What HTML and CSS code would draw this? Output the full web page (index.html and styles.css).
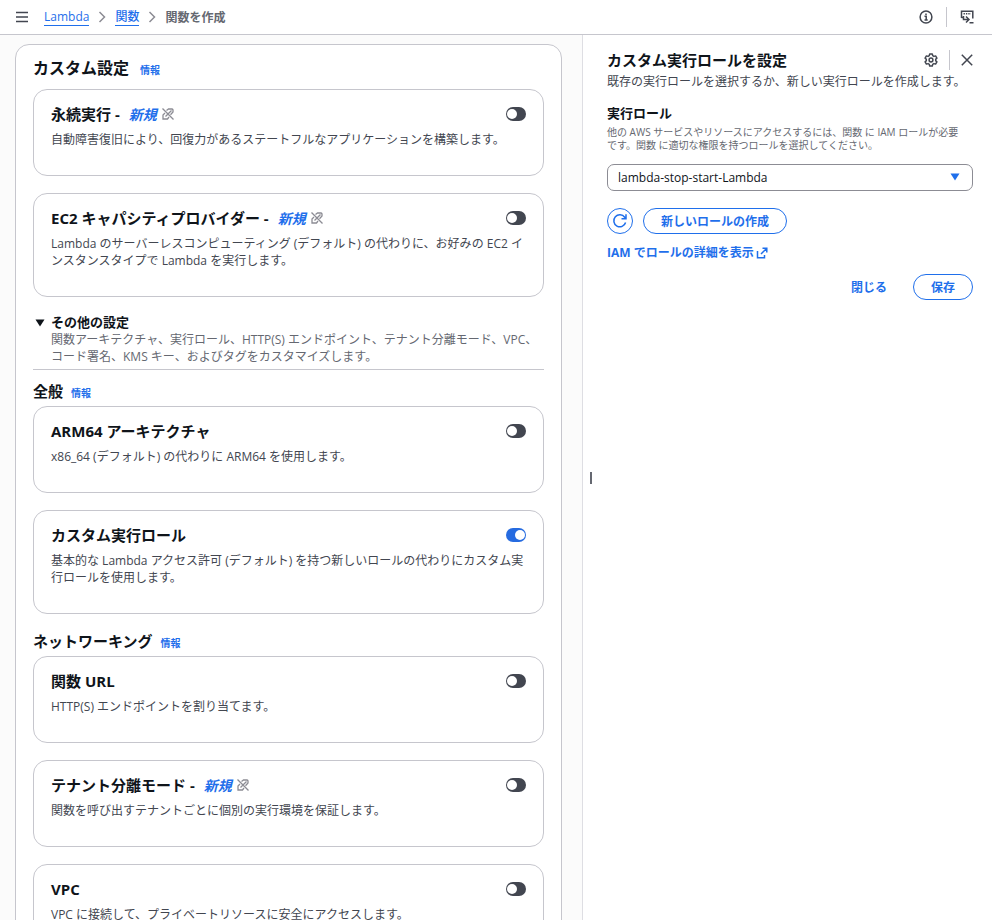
FILE: index.html
```html
<!DOCTYPE html>
<html lang="ja">
<head>
    <meta charset="UTF-8">
    <meta name="viewport" content="width=device-width, initial-scale=1.0">
    <title>関数を作成 - Lambda</title>
    <link rel="stylesheet" href="styles.css">
</head>
<body>
    <!-- Shared icons -->
    <svg class="sprite" aria-hidden="true">
        <symbol id="icon-new" viewBox="0 0 12 12">
            <path d="M.5 .5l11 11M4.500 2.500L6.500 1h3.500a1.300 1.300 0 0 1 1 1v2L8.500 6.800M9.500 2.500L3.500 8.500M3 5L1 7v4h4.500l1.500-2"/>
        </symbol>
        <symbol id="icon-chevron" viewBox="0 0 8 12">
            <path d="M1.500 1l5 5-5 5"/>
        </symbol>
    </svg>

    <header class="topbar">
        <button class="icon-btn" type="button" aria-label="メニュー">
            <svg width="12" height="12" viewBox="0 0 12 12"><path d="M0 1.500h12M0 6h12M0 10.500h12"/></svg>
        </button>
        <nav class="breadcrumb">
            <a href="#">Lambda</a>
            <svg class="chevron" width="8" height="12"><use href="#icon-chevron"/></svg>
            <a href="#">関数</a>
            <svg class="chevron" width="8" height="12"><use href="#icon-chevron"/></svg>
            <span class="current">関数を作成</span>
        </nav>
        <div class="topbar-tools">
            <button class="icon-btn" type="button" aria-label="ヘルプ">
                <svg width="14" height="14" viewBox="0 0 14 14"><circle cx="7" cy="7" r="5.900"/><path d="M5.500 6.300H7.200V10M5.500 10h3.200M7 3.500v1.500"/></svg>
            </button>
            <span class="divider"></span>
            <button class="icon-btn" type="button" aria-label="CloudShell">
                <svg width="14" height="14" viewBox="0 0 14 14"><path d="M1.500 8V1.200h11.300V8.500M9.500 12.800h4M1.500 7.500h1.500M3.500 6v3.500h5M6 6.500l3 3-3 3"/><path stroke-dasharray="1.400 1" d="M3.500 3.800h7.500"/></svg>
            </button>
        </div>
    </header>

    <div class="layout">
        <main class="main-pane">
            <section class="panel">
                <div class="panel-heading">
                    <h1>カスタム設定</h1>
                    <a class="info" href="#">情報</a>
                </div>

                <div class="cards">
                    <div class="card">
                        <div class="card-title">
                            <h2><label for="durable">永続実行 -</label></h2>
                            <a class="new" href="#">新規<svg width="12" height="12"><use href="#icon-new"/></svg></a>
                            <input class="toggle" type="checkbox" id="durable">
                        </div>
                        <p>自動障害復旧により、回復力があるステートフルなアプリケーションを構築します。</p>
                    </div>
                    <div class="card">
                        <div class="card-title">
                            <h2><label for="capacity">EC2 キャパシティプロバイダー -</label></h2>
                            <a class="new" href="#">新規<svg width="12" height="12"><use href="#icon-new"/></svg></a>
                            <input class="toggle" type="checkbox" id="capacity">
                        </div>
                        <p>Lambda のサーバーレスコンピューティング (デフォルト) の代わりに、お好みの EC2 インスタンスタイプで Lambda を実行します。</p>
                    </div>
                </div>

                <details class="more" open>
                    <summary>
                        <svg class="caret" width="10" height="8" viewBox="0 0 10 8"><path d="M.5 .5h9L5 7.500z"/></svg>
                        <div>
                            <h2>その他の設定</h2>
                            <p>関数アーキテクチャ、実行ロール、HTTP(S) エンドポイント、テナント分離モード、VPC、コード署名、KMS キー、およびタグをカスタマイズします。</p>
                        </div>
                    </summary>

                    <div class="section-heading">
                        <h2>全般</h2>
                        <a class="info" href="#">情報</a>
                    </div>
                    <div class="cards">
                        <div class="card">
                            <div class="card-title">
                                <h3><label for="arm64">ARM64 アーキテクチャ</label></h3>
                                <input class="toggle" type="checkbox" id="arm64">
                            </div>
                            <p>x86_64 (デフォルト) の代わりに ARM64 を使用します。</p>
                        </div>
                        <div class="card">
                            <div class="card-title">
                                <h3><label for="custom-role">カスタム実行ロール</label></h3>
                                <input class="toggle" type="checkbox" id="custom-role" checked>
                            </div>
                            <p>基本的な Lambda アクセス許可 (デフォルト) を持つ新しいロールの代わりにカスタム実行ロールを使用します。</p>
                        </div>
                    </div>

                    <div class="section-heading">
                        <h2>ネットワーキング</h2>
                        <a class="info" href="#">情報</a>
                    </div>
                    <div class="cards">
                        <div class="card">
                            <div class="card-title">
                                <h3><label for="function-url">関数 URL</label></h3>
                                <input class="toggle" type="checkbox" id="function-url">
                            </div>
                            <p>HTTP(S) エンドポイントを割り当てます。</p>
                        </div>
                        <div class="card">
                            <div class="card-title">
                                <h3><label for="tenant">テナント分離モード -</label></h3>
                                <a class="new" href="#">新規<svg width="12" height="12"><use href="#icon-new"/></svg></a>
                                <input class="toggle" type="checkbox" id="tenant">
                            </div>
                            <p>関数を呼び出すテナントごとに個別の実行環境を保証します。</p>
                        </div>
                        <div class="card">
                            <div class="card-title">
                                <h3><label for="vpc">VPC</label></h3>
                                <input class="toggle" type="checkbox" id="vpc">
                            </div>
                            <p>VPC に接続して、プライベートリソースに安全にアクセスします。</p>
                        </div>
                    </div>
                </details>
            </section>
        </main>

        <aside class="side-pane">
            <div class="resize-handle" role="separator" aria-orientation="vertical"></div>
            <div class="side-content">
                <div class="side-heading">
                    <h2>カスタム実行ロールを設定</h2>
                    <button class="icon-btn" type="button" aria-label="設定">
                        <svg width="14" height="14" viewBox="0 0 14 14"><path stroke-linejoin="round" d="M5.700 1h2.600l.4 1.700 1.200.7 1.700-.5 1.300 2.200L11.700 6.300v1.400l1.200 1.200-1.300 2.200-1.700-.5-1.200.7-.4 1.700H5.700l-.4-1.700-1.200-.7-1.700.5L1.100 8.900l1.200-1.200V6.300L1.100 5.100l1.300-2.200 1.700.5 1.200-.7z"/><circle cx="7" cy="7" r="1.900"/></svg>
                    </button>
                    <span class="divider"></span>
                    <button class="icon-btn" type="button" aria-label="閉じる">
                        <svg width="12" height="12" viewBox="0 0 12 12"><path d="M.8 .8l10.400 10.400M11.200 .8L.8 11.200"/></svg>
                    </button>
                </div>
                <p class="side-description">既存の実行ロールを選択するか、新しい実行ロールを作成します。</p>

                <label class="field-label" for="role">実行ロール</label>
                <p class="field-hint">他の AWS サービスやリソースにアクセスするには、関数 に IAM ロールが必要です。関数 に適切な権限を持つロールを選択してください。</p>
                <div class="select-wrap">
                    <select id="role">
                        <option>lambda-stop-start-Lambda</option>
                    </select>
                    <svg width="10" height="8" viewBox="0 0 10 8"><path d="M.5 .5h9L5 7.500z"/></svg>
                </div>

                <div class="role-actions">
                    <button class="btn btn-round" type="button" aria-label="更新">
                        <svg width="16" height="16" viewBox="0 0 16 16"><path d="M13.600 9.500A6 6 0 1 1 12.700 4.300L14 5.700M14 1.200v4.600H9.500"/></svg>
                    </button>
                    <button class="btn" type="button">新しいロールの作成</button>
                </div>
                <a class="iam-link" href="#">IAM でロールの詳細を表示<svg width="12" height="12" viewBox="0 0 12 12"><path d="M6.500 1.200h4.300v4.300M10.800 1.200L5 7M1.500 4v6.800h7V8"/></svg></a>

                <div class="side-footer">
                    <button class="btn btn-link" type="button">閉じる</button>
                    <button class="btn" type="button">保存</button>
                </div>
            </div>
        </aside>
    </div>
</body>
</html>
```

FILE: styles.css
```css
* {
    margin: 0;
    padding: 0;
    box-sizing: border-box;
}

body {
    font-family: "Open Sans", "Noto Sans CJK JP", sans-serif;
    font-size: 12px;
    line-height: 17px;
    color: #424650;
    background: white;
    height: 100vh;
    display: flex;
    flex-direction: column;
    overflow: hidden;
}

h1, h2, h3 {
    font-size: 15px;
    line-height: 22px;
    font-weight: 700;
    color: #0f141a;
}

h1 {
    font-size: 16px;
    line-height: 24px;
}

a {
    color: #1f6feb;
    text-decoration: none;
}

button, select {
    font: inherit;
    cursor: pointer;
}

svg {
    display: block;
    flex: none;
    fill: none;
    stroke: currentColor;
    stroke-width: 1.5;
}

.sprite {
    position: absolute;
    width: 0;
    height: 0;
}

.icon-btn {
    border: none;
    background: none;
    color: #424650;
}

.divider {
    width: 1px;
    height: 20px;
    background: #c6c6cd;
}

/* Top bar */
.topbar {
    flex: none;
    height: 35px;
    padding: 0 18px 0 16px;
    display: flex;
    align-items: center;
    gap: 16px;
    border-bottom: 1px solid #c6c6cd;
}

.breadcrumb {
    display: flex;
    align-items: center;
    gap: 9px;
}

.breadcrumb a {
    font-weight: 500;
    border-bottom: 1px solid #1f6feb;
}

.breadcrumb .chevron {
    color: #8c8c94;
}

.breadcrumb .current {
    font-weight: 600;
    color: #656871;
}

.topbar-tools {
    display: flex;
    align-items: center;
    gap: 13px;
    margin-left: auto;
}

/* Split layout */
.layout {
    flex: 1;
    min-height: 0;
    display: grid;
    grid-template-columns: minmax(0, 583fr) minmax(0, 409fr);
}

.main-pane {
    padding: 9px 20px 20px 15px;
    background: #fbfbfb;
    border-right: 1px solid #dedee3;
    overflow: hidden;
}

.panel {
    padding: 11px 17px 20px;
    background: white;
    border: 1px solid #c6c6cd;
    border-radius: 14px;
}

.panel-heading, .section-heading {
    display: flex;
    align-items: baseline;
    gap: 8px;
}

.panel-heading {
    gap: 11px;
    margin-bottom: 9px;
}

.section-heading {
    margin: 16px 0 4px;
}

summary + .section-heading {
    margin-top: 10px;
}

.info {
    font-size: 10px;
    font-weight: 700;
}

/* Option cards */
.cards {
    display: flex;
    flex-direction: column;
    gap: 17px;
}

.card {
    padding: 13px 17px 27px;
    border: 1px solid #c6c6cd;
    border-radius: 14px;
}

.card-title {
    display: flex;
    align-items: center;
    margin-bottom: 6px;
}

.new {
    display: flex;
    align-items: center;
    gap: 5px;
    margin-left: 9px;
    font-size: 14px;
    font-weight: 700;
    font-style: italic;
}

.new svg {
    color: #8c8c94;
    stroke-width: 1.3;
}

.toggle {
    appearance: none;
    display: flex;
    align-items: center;
    width: 20px;
    height: 14px;
    margin-left: auto;
    padding: 0 1px;
    border-radius: 7px;
    background: #424650;
    cursor: pointer;
}

.toggle::before {
    content: "";
    width: 10px;
    height: 10px;
    border-radius: 50%;
    background: white;
}

.toggle:checked {
    justify-content: flex-end;
    background: #266be0;
}

/* Expandable settings */
.more {
    margin-top: 16px;
}

.more summary {
    display: flex;
    gap: 6px;
    padding: 0 0 4px 2px;
    border-bottom: 1px solid #c6c6cd;
    list-style: none;
    cursor: pointer;
}

.more summary h2 {
    font-size: 13px;
    line-height: 18px;
}

.more summary p {
    color: #656871;
}

.more .caret {
    margin-top: 6px;
    fill: #0f141a;
    stroke: none;
}

/* Side panel */
.side-pane {
    display: flex;
    align-items: flex-start;
}

.resize-handle {
    align-self: center;
    width: 2px;
    height: 12px;
    margin: 0 15px 0 7px;
    background: #656871;
}

.side-content {
    flex: 1;
    padding: 14px 19px 0 0;
}

.side-heading {
    display: flex;
    align-items: center;
    gap: 11px;
    margin-bottom: 2px;
}

.side-heading h2 {
    margin-right: auto;
}

.side-description {
    margin-bottom: 14px;
}

.field-label {
    display: block;
    font-size: 13px;
    line-height: 18px;
    font-weight: 700;
    color: #0f141a;
}

.field-hint {
    margin: 4px 0 12px;
    padding-right: 6px;
    font-size: 10px;
    line-height: 13px;
    color: #656871;
}

.select-wrap {
    position: relative;
}

.select-wrap select {
    appearance: none;
    width: 100%;
    height: 27px;
    padding: 0 30px 0 10px;
    border: 1px solid #8c8c94;
    border-radius: 7px;
    background: white;
    color: #0f141a;
    font-weight: 500;
}

.select-wrap svg {
    position: absolute;
    top: 9px;
    right: 13px;
    fill: #1f6feb;
    stroke: none;
    pointer-events: none;
}

.role-actions {
    display: flex;
    gap: 10px;
    margin: 17px 0 10px;
}

.btn {
    height: 26px;
    padding: 0 17px;
    border: 1px solid #1f6feb;
    border-radius: 13px;
    background: white;
    color: #1f6feb;
    font-weight: 700;
}

.btn-round {
    display: flex;
    align-items: center;
    justify-content: center;
    width: 26px;
    padding: 0;
}

.btn-link {
    border-color: transparent;
}

.iam-link {
    display: flex;
    align-items: center;
    gap: 2px;
    font-weight: 700;
}

.side-footer {
    display: flex;
    justify-content: flex-end;
    gap: 8px;
    margin-top: 13px;
}
```
